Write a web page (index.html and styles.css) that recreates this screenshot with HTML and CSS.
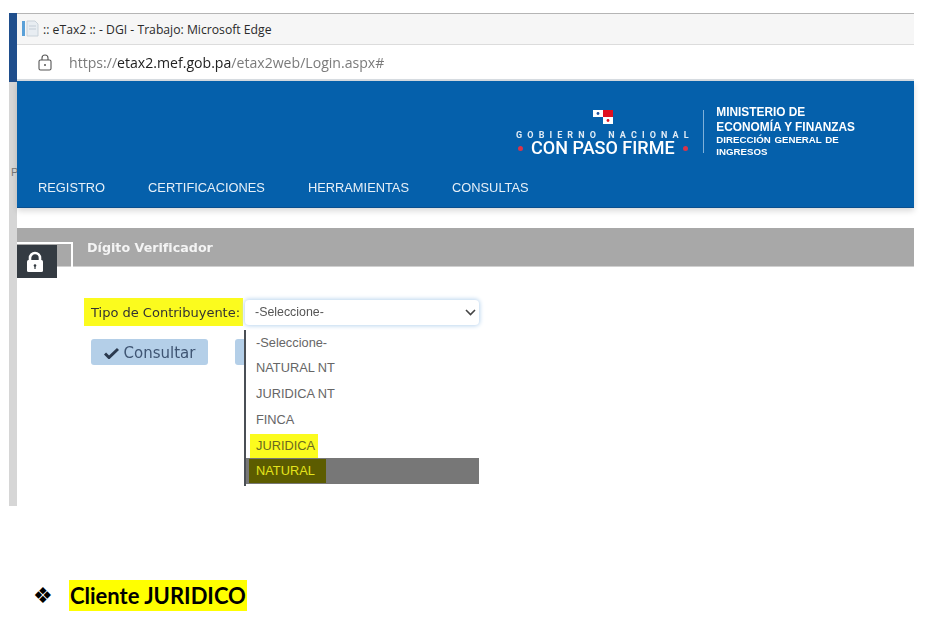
FILE: index.html
```html
<!DOCTYPE html>
<html lang="es">
<head>
<meta charset="utf-8">
<title>eTax2</title>
<link rel="stylesheet" href="styles.css">
</head>
<body>
<div class="shot">
  <div class="rail"><div class="rail-top"></div><div class="rail-p">P</div></div>
  <div class="window">
    <div class="titlebar">
      <svg class="favicon" width="20" height="18" viewBox="0 0 20 18"><rect x="0" y="1" width="3" height="15" fill="#5aa0d8"/><path d="M5 1h8l3 3v12H5z" fill="#e8edf2" stroke="#c9d2da"/><path d="M7 6h7M7 9h7" stroke="#c3ccd6"/></svg>
      <span class="title-text">:: eTax2 :: - DGI - Trabajo: Microsoft Edge</span>
    </div>
    <div class="addressbar">
      <svg class="padlock" width="14" height="17" viewBox="0 0 14 17"><path d="M4 6V4a3 3 0 0 1 6 0v2" fill="none" stroke="#555" stroke-width="1.1"/><rect x="1" y="6" width="12" height="10" rx="1.5" fill="none" stroke="#555" stroke-width="1.1"/><circle cx="7" cy="11" r="1" fill="#555"/></svg>
      <span class="url">https://<b>etax2.mef.gob.pa</b>/etax2web/Login.aspx#</span>
    </div>
    <header class="banner">
      <div class="brand">
        <div class="gov">
          <svg class="flag" width="20" height="14" viewBox="0 0 20 14"><rect width="10" height="7" fill="#fff"/><rect x="10" width="10" height="7" fill="#e01020"/><rect x="10" y="7" width="10" height="7" fill="#fff"/><circle cx="5" cy="3.5" r="1.4" fill="#1a4f9c"/><circle cx="15" cy="10.5" r="1.4" fill="#e01020"/></svg>
          <div class="gov-line">GOBIERNO NACIONAL</div>
          <div class="gov-slogan"><i class="dot"></i>CON PASO FIRME<i class="dot"></i></div>
        </div>
        <div class="ministry">
          <div class="min-text">
            <div class="min-big">MINISTERIO DE</div>
            <div class="min-big">ECONOMÍA Y FINANZAS</div>
            <div class="min-small">DIRECCIÓN GENERAL DE</div>
            <div class="min-small">INGRESOS</div>
          </div>
        </div>
      </div>
      <nav class="menu">
        <span>REGISTRO</span><span>CERTIFICACIONES</span><span>HERRAMIENTAS</span><span>CONSULTAS</span>
      </nav>
    </header>
    <div class="band"><span class="band-title">Dígito Verificador</span></div>
    <div class="tab-outline"></div>
    <div class="lock-tab">
      <svg width="20" height="22" viewBox="0 0 20 22"><path d="M5 10V7a5 5 0 0 1 10 0v3" fill="none" stroke="#fff" stroke-width="2.6"/><rect x="2" y="9" width="16" height="12" rx="1.5" fill="#fff"/><circle cx="10" cy="14.5" r="1.3" fill="#333a40"/><rect x="9.4" y="15" width="1.2" height="3" fill="#333a40"/></svg>
    </div>
    <main class="form">
      <div class="field">
        <label class="label">Tipo de Contribuyente:</label>
        <div class="select">
          <span class="select-value">-Seleccione-</span>
          <svg width="11" height="7" viewBox="0 0 11 7"><path d="M1 1l4.5 4.5L10 1" fill="none" stroke="#444" stroke-width="1.6"/></svg>
        </div>
      </div>
      <div class="actions">
        <button class="btn"><svg width="15" height="12" viewBox="0 0 15 12"><path d="M1 6.5l4 4L14 2" fill="none" stroke="#2b3a4f" stroke-width="3"/></svg>Consultar</button>
        <button class="btn btn-hidden"></button>
      </div>
      <ul class="dropdown">
        <li>-Seleccione-</li>
        <li>NATURAL NT</li>
        <li>JURIDICA NT</li>
        <li>FINCA</li>
        <li><mark class="hl">JURIDICA</mark></li>
        <li class="active"><mark class="hl-dark">NATURAL</mark></li>
      </ul>
    </main>
  </div>
</div>
<p class="bullet"><span class="diamond">❖</span><mark class="doc-hl">Cliente JURIDICO</mark></p>
</body>
</html>
```

FILE: styles.css
```css
* { box-sizing: border-box; }
html, body { margin: 0; padding: 0; background: #fff; }
body { width: 930px; height: 625px; overflow: hidden; position: relative; }

.shot {
  display: flex;
  width: 905px;
  height: 493px;
  margin: 13px 0 0 9px;
  filter: blur(0.45px);
}
.rail { width: 8px; flex: none; background: #d6d6d6; position: relative; }
.rail-top { height: 69px; background: #1f4e8c; }
.rail-p { position: absolute; left: 2px; top: 153px; font: 11px "Liberation Sans", sans-serif; color: #777; }

.window { flex: 1; position: relative; background: #fff; display: flex; flex-direction: column; }

.titlebar {
  height: 32px;
  background: #f6f6f6;
  border-top: 1px solid #b5b5b5;
  border-bottom: 1px solid #dcdcdc;
  display: flex;
  align-items: center;
  padding-left: 5px;
  gap: 1px;
  font: 12.2px "Open Sans", sans-serif;
  color: #2a2a2a;
}
.addressbar {
  height: 36px;
  display: flex;
  align-items: center;
  padding-left: 21px;
  border-bottom: 2px solid #d8dde2;
  font: 14.1px "Open Sans", sans-serif;
  color: #7b7b7b;
}
.padlock { margin-right: 17px; }
.url b { font-weight: 400; color: #222; }

.banner {
  height: 127px;
  background: #0560ab;
  box-shadow: 0 3px 6px rgba(0,0,0,.15);
  color: #fff;
  display: flex;
  flex-direction: column;
  border-bottom: 1px solid #0a4f8e;
}
.brand { display: flex; justify-content: flex-end; padding: 29px 59px 0 0; height: 98px; }
.gov { width: 177px; display: flex; flex-direction: column; align-items: center; margin-right: 12px; }
.flag { display: block; margin-bottom: 6px; }
.gov-line { font: 700 9px/10px Roboto, sans-serif; letter-spacing: 5.1px; white-space: nowrap; color: #e0ebf5; margin-right: -4px; }
.gov-slogan { font: 500 18px/16px Roboto, sans-serif; display: flex; align-items: center; gap: 8px; white-space: nowrap; }
.dot { width: 5px; height: 5px; border-radius: 50%; background: #d8344a; display: block; }
.ministry { border-left: 1px solid #7fb0d9; padding-left: 12px; height: 43px; font-family: "Liberation Sans", sans-serif; font-weight: 700; align-self: flex-start; white-space: nowrap; }
.min-text { margin-top: -5px; }
.min-big { font-size: 11.85px; line-height: 14.5px; }
.min-small { font-size: 9.7px; line-height: 12px; word-spacing: 1px; }

.menu { display: flex; gap: 43px; padding-left: 21px; font: 12.85px/17px "Liberation Sans", sans-serif; color: #e6eff7; }

.band {
  margin-top: 20px;
  height: 39px;
  background: #a8a8a8;
  border-bottom: 1px solid #d0d0d0;
  padding: 12px 0 0 70px;
  font: 700 12.7px/16px "DejaVu Sans", sans-serif;
  color: #f4f4f4;
}
.tab-outline {
  position: absolute;
  left: 0; top: 229px;
  width: 56px; height: 38px;
  border-top: 2px solid #fff;
  border-right: 2px solid #fff;
}
.lock-tab {
  position: absolute;
  left: 0; top: 232px;
  width: 40px; height: 33px;
  background: #343b42;
  display: flex;
  align-items: center;
  justify-content: center;
  padding-right: 4px;
}

.form { position: relative; flex: 1; padding: 31px 0 0 67px; font-family: "DejaVu Sans", sans-serif; }
.field { display: flex; align-items: center; }
.label {
  width: 159px;
  height: 28px;
  background: #fbfb1e;
  padding: 7px 0 0 7px;
  font-size: 13px;
  line-height: 16px;
  color: #333;
  white-space: nowrap;
}
.select {
  width: 234px;
  height: 25px;
  margin: 1px 0 0 2px;
  border-radius: 4px;
  background: #fff;
  box-shadow: 0 0 4px 1px #bcd6ef;
  display: flex;
  align-items: center;
  justify-content: space-between;
  padding: 0 3px 0 10px;
  font: 12.4px "Liberation Sans", sans-serif;
  color: #555;
}
.select-value { margin-bottom: 2px; }
.actions { display: flex; gap: 27px; margin: 13px 0 0 7px; }
.btn {
  height: 26px;
  width: 117px;
  border: 0;
  border-radius: 3px;
  background: #b4cfe8;
  display: flex;
  align-items: center;
  justify-content: center;
  gap: 5px;
  padding: 1px 0 0;
  font: 15px "DejaVu Sans", sans-serif;
  color: #3f5573;
}
.btn-hidden { width: 30px; }
.dropdown {
  position: absolute;
  left: 227px;
  top: 62.5px;
  width: 235px;
  height: 156px;
  margin: 0;
  padding: 0;
  list-style: none;
  background: #fff;
  border-left: 2px solid #4a4f55;
  font: 12.8px/25.8px "Liberation Sans", sans-serif;
  color: #666;
}
.dropdown li { height: 25.8px; padding-left: 10px; }
.dropdown .active { background: #777; color: #e8e830; }
.hl { background: #fbfb1e; color: #6a6a20; display: inline-block; margin-left: -6px; padding: 0 3px 0 6px; height: 24px; line-height: 24px; }
.hl-dark { background: #5c5c00; color: #e4e41c; display: inline-block; margin-left: -7px; padding: 0 11px 0 7px; height: 24px; line-height: 24px; }

.bullet {
  position: absolute;
  left: 33px;
  top: 580px;
  margin: 0;
  display: flex;
  align-items: center;
  height: 31px;
  font: 700 22px/31px "Lato", sans-serif;
  color: #000;
}
.diamond { width: 36px; font: 22px/31px "DejaVu Sans", sans-serif; }
.doc-hl { background: #ffff00; color: #000; padding: 0 1px; height: 31px; }
```
